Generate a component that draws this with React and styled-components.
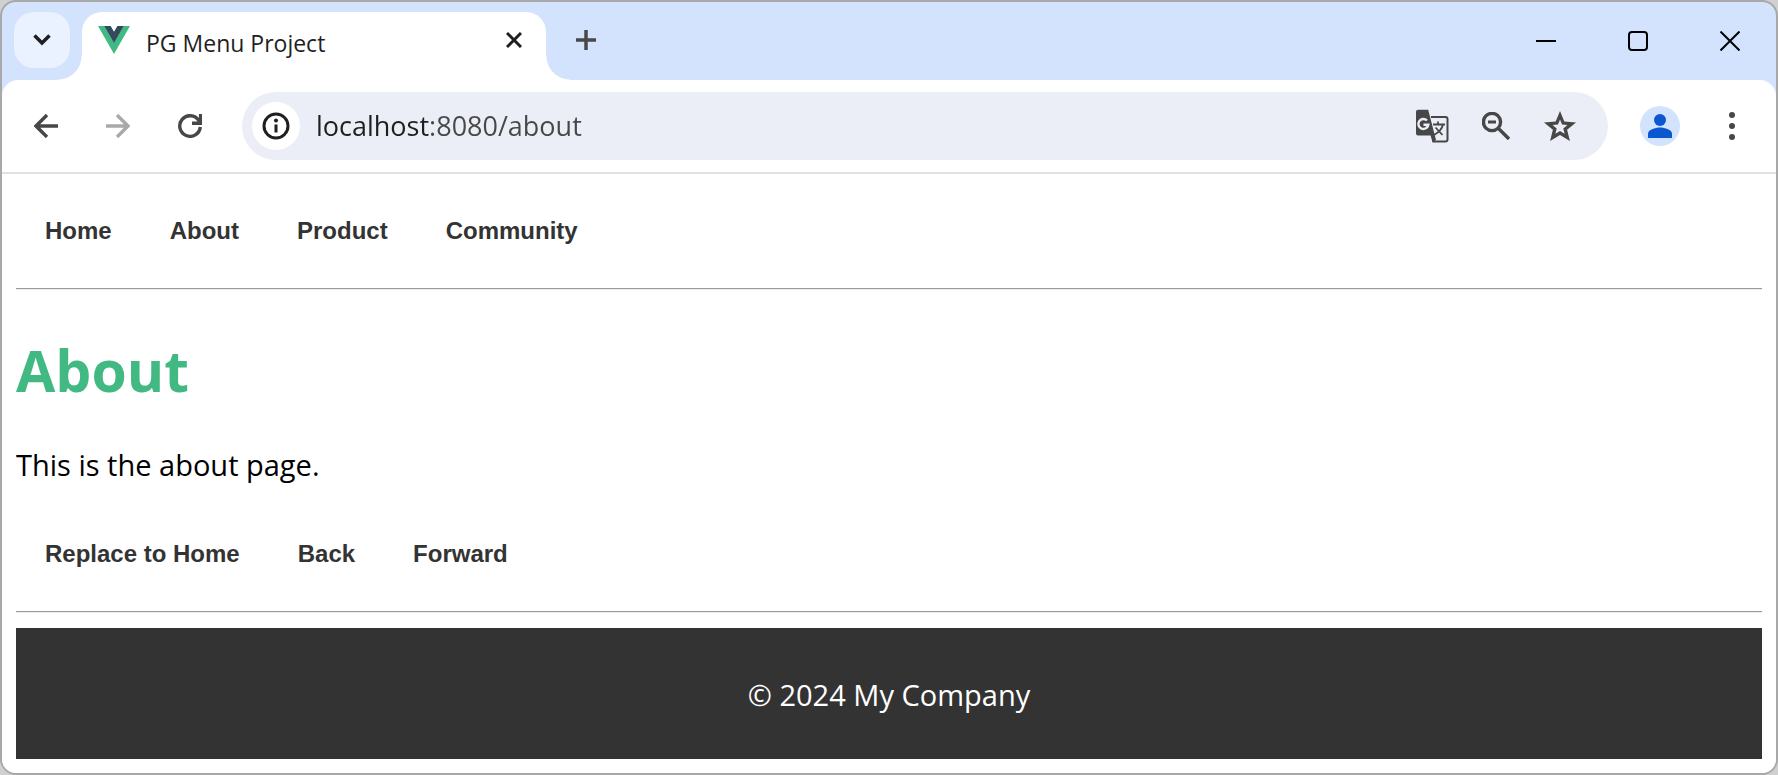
import React from "react";
import styled, { createGlobalStyle } from "styled-components";

const uiFont = '"Open Sans", "Noto Sans", "Noto Sans CJK KR", sans-serif';
const ink = "#1f1f1f";
const muted = "#474747";

const GlobalStyle = createGlobalStyle`
  *, *::before, *::after { box-sizing: border-box; }
  body { margin: 0; background: #d0d0d0; font-family: ${uiFont}; }
  button { border: 0; padding: 0; background: none; cursor: pointer; color: inherit; font: inherit; }
  svg { display: block; flex: none; }
`;

const BrowserWindow = styled.div`
  display: flex;
  flex-direction: column;
  min-height: 100vh;
  border: 2px solid #a8a8a8;
  border-radius: 16px;
  overflow: hidden;
  background: #d3e3fd;
`;

const TabStrip = styled.header`
  display: flex;
  align-items: flex-start;
  height: 78px;
`;

const TabSearch = styled.button`
  display: grid;
  place-items: center;
  width: 56px;
  height: 56px;
  margin: 10px 12px 0;
  border-radius: 20px;
  background: #ebf2ff;
  color: ${ink};
`;

const Tab = styled.div`
  position: relative;
  display: flex;
  align-items: center;
  width: 464px;
  height: 68px;
  margin-top: 10px;
  padding: 0 16px 12px;
  border-radius: 20px 20px 0 0;
  background: #fff;

  &::before,
  &::after {
    content: "";
    position: absolute;
    bottom: 0;
    width: 24px;
    height: 24px;
  }
  &::before {
    right: 100%;
    background: radial-gradient(circle at 0 0, transparent 23px, #fff 24px);
  }
  &::after {
    left: 100%;
    background: radial-gradient(circle at 100% 0, transparent 23px, #fff 24px);
  }
`;

const TabTitle = styled.span`
  flex: 1;
  padding: 6px 0 0 16px;
  font-size: 23px;
  line-height: 32px;
  color: ${ink};
  white-space: nowrap;
`;

const TabClose = styled.button`
  display: grid;
  place-items: center;
  width: 32px;
  height: 32px;
  color: ${ink};
`;

const NewTab = styled.button`
  display: grid;
  place-items: center;
  width: 56px;
  height: 56px;
  margin: 10px 0 0 12px;
  color: ${muted};
`;

const WindowControls = styled.div`
  display: flex;
  margin-left: auto;
`;

const WindowButton = styled.button`
  display: grid;
  place-items: center;
  width: 92px;
  height: 78px;
  color: #000;
`;

const Toolbar = styled.div`
  display: flex;
  align-items: center;
  height: 94px;
  padding: 0 8px;
  border-bottom: 2px solid #e1e1e1;
  border-radius: 16px 16px 0 0;
  background: #fff;
`;

const ToolButton = styled.button`
  display: grid;
  place-items: center;
  width: 72px;
  height: 72px;
  color: ${(p) => (p.disabled ? "#a9a9a9" : muted)};
`;

const AddressBar = styled.form`
  flex: 1;
  display: flex;
  align-items: center;
  height: 68px;
  margin: 0 16px;
  padding: 0 16px 0 10px;
  border-radius: 34px;
  background: #ebeef7;
`;

const SiteInfo = styled.button`
  display: grid;
  place-items: center;
  width: 48px;
  height: 48px;
  border-radius: 50%;
  background: #fff;
  color: ${ink};
`;

/* The host name is darker than the port and path that follow it. */
const AddressInput = styled.input`
  flex: 1;
  min-width: 0;
  height: 48px;
  margin: 0;
  padding: 0 0 0 16px;
  border: 0;
  outline: 0;
  font: 27px/48px ${uiFont};
  color: ${ink};
  background: linear-gradient(90deg, ${ink} 129px, ${muted} 129px);
  background-clip: text;
  -webkit-text-fill-color: transparent;
`;

const AddressAction = styled.button`
  display: grid;
  place-items: center;
  width: 64px;
  height: 48px;
  color: ${muted};
`;

const Avatar = styled.span`
  display: grid;
  place-items: center;
  width: 40px;
  height: 40px;
  border-radius: 50%;
  background: #d3e3fd;
  color: #0b57d0;
`;

const Page = styled.main`
  flex: 1;
  padding: 0 14px 14px;
  background: #fff;
`;

const ButtonRow = styled.nav`
  display: flex;
  gap: 2px;
  padding: 28px 1px;
`;

const PageButton = styled.button`
  padding: 14px 28px;
  font: bold 24px/30px "Liberation Sans", Arial, sans-serif;
  color: #333;
`;

const Divider = styled.hr`
  height: 2px;
  margin: 0;
  border: 0;
  border-top: 1px solid #999;
  background: #eee;
`;

const Heading = styled.h1`
  margin: 40px 0 36px;
  font-size: 57px;
  line-height: 80px;
  font-weight: 700;
  color: #42b983;
`;

const Text = styled.p`
  margin: 0 0 13px;
  font-size: 29px;
  line-height: 38px;
  color: #000;
`;

const Footer = styled.footer`
  margin-top: 15px;
  padding: 48px 0 45px;
  background: #333;
  text-align: center;

  ${Text} {
    margin: 0;
    color: #fff;
  }
`;

const VueLogo = () => (
  <svg width="32" height="28" viewBox="0 0 32 28">
    <path d="M0 0h12.5L16 6l3.500-6H32L16 28z" fill="#42b883" />
    <path d="M6.400 0h6.100L16 6l3.500-6h6.100L16 16.800z" fill="#35495e" />
  </svg>
);

const TranslateIcon = () => (
  <svg width="34" height="34" viewBox="0 0 34 34" fill="none" stroke="currentColor" strokeWidth="2">
    <path d="M16 8h14.500a2 2 0 0 1 2 2v20.500a2 2 0 0 1-2 2H17.500" />
    <path d="M18 15.500h12M23 12.500v3M28 15.500c-1 4.500-4.500 8-9 10.500M20.500 18.500l7 7.500" strokeWidth="1.8" />
    <path d="M3 .7h10.200L21 31l-3.500 2.300L15.600 26.500H3a2 2 0 0 1-2-2V2.700a2 2 0 0 1 2-2z" fill="currentColor" stroke="none" />
    <path d="M12 11.500a5 5 0 1 0 1.300 4.300H8.500" stroke="#ebeef7" strokeWidth="2.400" />
  </svg>
);

const Stroke = ({ w, h = w, sw = 3, children, ...rest }) => (
  <svg width={w} height={h} viewBox={`0 0 ${w} ${h}`} fill="none" stroke="currentColor" strokeWidth={sw} {...rest}>
    {children}
  </svg>
);

const pageLinks = ["Home", "About", "Product", "Community"];
const historyActions = ["Replace to Home", "Back", "Forward"];

export default function App() {
  return (
    <>
      <GlobalStyle />
      <BrowserWindow>
        <TabStrip>
          <TabSearch aria-label="Search tabs">
            <Stroke w={18} h={12} sw={3.5}><path d="M1.500 1.500 9 9l7.500-7.500" /></Stroke>
          </TabSearch>
          <Tab>
            <VueLogo />
            <TabTitle>PG Menu Project</TabTitle>
            <TabClose aria-label="Close tab">
              <Stroke w={16}><path d="M1 1l14 14M15 1 1 15" /></Stroke>
            </TabClose>
          </Tab>
          <NewTab aria-label="New tab">
            <Stroke w={20} sw={3.500}><path d="M10 0v20M0 10h20" /></Stroke>
          </NewTab>
          <WindowControls>
            <WindowButton aria-label="Minimize">
              <Stroke w={20} sw={2}><path d="M0 10h20" /></Stroke>
            </WindowButton>
            <WindowButton aria-label="Maximize">
              <Stroke w={20} sw={2}><rect x="1" y="1" width="18" height="18" rx="3" /></Stroke>
            </WindowButton>
            <WindowButton aria-label="Close">
              <Stroke w={20} sw={2}><path d="M.500.500l19 19M19.500.500l-19 19" /></Stroke>
            </WindowButton>
          </WindowControls>
        </TabStrip>

        <Toolbar>
          <ToolButton aria-label="Back">
            <Stroke w={24} sw={3.4}><path d="M24 12H2.500M13 1 2 12l11 11" /></Stroke>
          </ToolButton>
          <ToolButton aria-label="Forward" disabled>
            <Stroke w={24} sw={3.4}><path d="M0 12h21.500M11 1l11 11-11 11" /></Stroke>
          </ToolButton>
          <ToolButton aria-label="Reload">
            <Stroke w={24} sw={3.4}>
              <path d="M22.300 13A10.300 10.300 0 1 1 20.700 6.400l2 3" />
              <path d="M22.600 0v9.300H14" />
            </Stroke>
          </ToolButton>
          <AddressBar onSubmit={(e) => e.preventDefault()}>
            <SiteInfo type="button" aria-label="View site information">
              <Stroke w={28}>
                <circle cx="14" cy="14" r="12" />
                <path d="M14 12.500v8" />
                <circle cx="14" cy="8.500" r="2" fill="currentColor" stroke="none" />
              </Stroke>
            </SiteInfo>
            <AddressInput aria-label="Address" defaultValue="localhost:8080/about" spellCheck={false} />
            <AddressAction type="button" aria-label="Translate this page"><TranslateIcon /></AddressAction>
            <AddressAction type="button" aria-label="Zoom out">
              <Stroke w={28} sw={3.4}>
                <circle cx="10" cy="10" r="8.600" />
                <path d="M16 16l11 11" />
                <path d="M6 10h8" strokeWidth="3" />
              </Stroke>
            </AddressAction>
            <AddressAction type="button" aria-label="Bookmark this page">
              <svg width="32" height="30" viewBox="0 0 32 30" fill="currentColor" fillRule="evenodd">
                <path d="M16 0l4.300 10.500L32 11.400l-8.900 7.400L25.900 30 16 24 6.100 30l2.800-11.200L0 11.400l11.700-.9zM16 8.500l-2 5-5.400.500 4.100 3.500-1.300 5.300L16 20l4.600 2.800-1.300-5.300 4.100-3.500-5.400-.5z" />
              </svg>
            </AddressAction>
          </AddressBar>
          <ToolButton aria-label="Profile">
            <Avatar>
              <svg width="24" height="24" viewBox="0 0 24 24" fill="currentColor">
                <circle cx="12" cy="6" r="6" />
                <path d="M0 24v-4.500C0 16 7 13.500 12 13.500s12 2.500 12 6V24z" />
              </svg>
            </Avatar>
          </ToolButton>
          <ToolButton aria-label="Menu">
            <svg width="6" height="28" viewBox="0 0 6 28" fill="currentColor">
              <circle cx="3" cy="3" r="3" /><circle cx="3" cy="14" r="3" /><circle cx="3" cy="25" r="3" />
            </svg>
          </ToolButton>
        </Toolbar>

        <Page>
          <ButtonRow>
            {pageLinks.map((label) => <PageButton key={label}>{label}</PageButton>)}
          </ButtonRow>
          <Divider />
          <Heading>About</Heading>
          <Text>This is the about page.</Text>
          <ButtonRow>
            {historyActions.map((label) => <PageButton key={label}>{label}</PageButton>)}
          </ButtonRow>
          <Divider />
          <Footer>
            <Text>© 2024 My Company</Text>
          </Footer>
        </Page>
      </BrowserWindow>
    </>
  );
}
